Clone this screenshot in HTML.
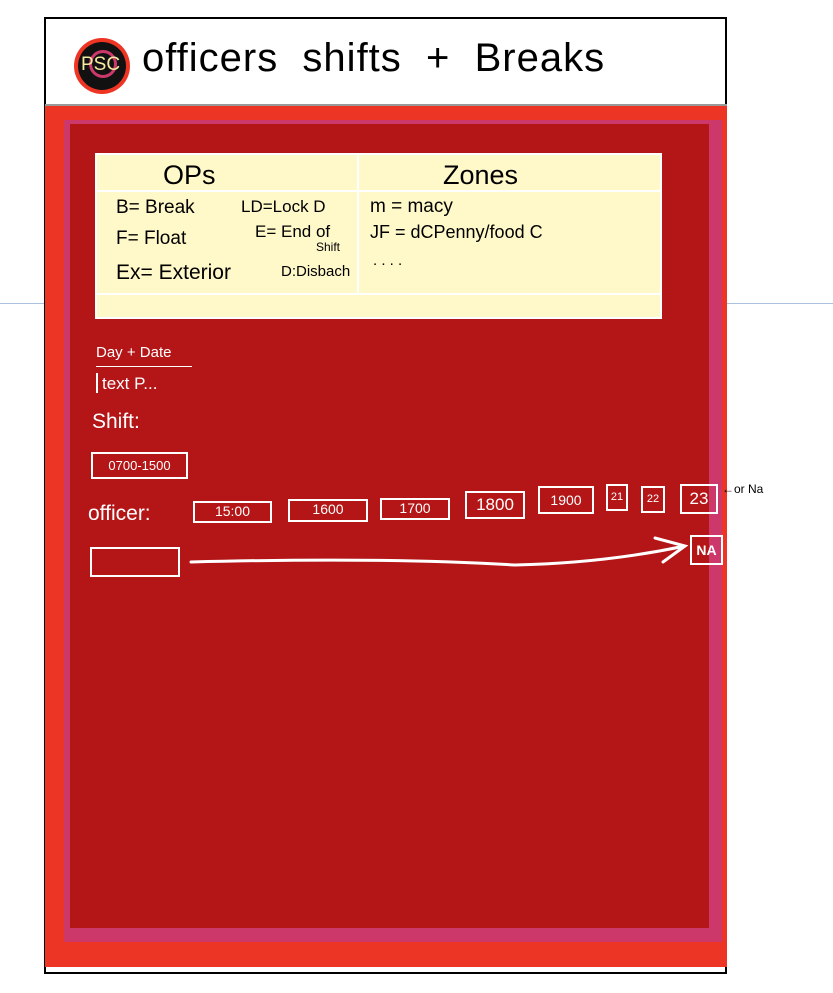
<!DOCTYPE html>
<html><head><style>
body{margin:0;width:833px;height:993px;background:#fff;position:relative;overflow:hidden;font-family:"Liberation Sans",sans-serif}
.a{position:absolute}
.w{color:#fff}
.box{position:absolute;border:2px solid #fff;box-sizing:border-box;color:#fff;font-size:14px;text-align:center;line-height:16px}
</style></head><body>
<div class="a" style="left:0;top:303px;width:833px;height:1px;background:#a9c3de"></div>
<div class="a" style="left:44px;top:17px;width:683px;height:957px;border:2px solid #000;box-sizing:border-box;background:#fff"></div>
<div class="a" style="left:45px;top:104px;width:682px;height:2px;background:#999"></div>
<div class="a" style="left:45px;top:106px;width:682px;height:861px;background:#ec3524"></div>
<div class="a" style="left:64px;top:120px;width:658px;height:822px;background:#cd386b"></div>
<div class="a" style="left:70px;top:124px;width:639px;height:804px;background:#b41517"></div>
<!-- logo -->
<div class="a" style="left:74px;top:38px;width:56px;height:56px;border-radius:50%;background:#ee3524"></div>
<div class="a" style="left:78px;top:42px;width:48px;height:48px;border-radius:50%;background:#111"></div>
<div class="a" style="left:89px;top:50px;width:28px;height:28px;border-radius:50%;border:3px solid #cd386b;box-sizing:border-box"></div>
<div class="a" style="left:81px;top:54px;font-size:19px;color:#f6eba0">PSC</div>
<div class="a" style="left:142px;top:36px;font-size:40px;color:#000;letter-spacing:1px">officers&nbsp; shifts &nbsp;+&nbsp; Breaks</div>
<!-- table -->
<div class="a" style="left:95px;top:153px;width:567px;height:166px;background:#fff8c8;border:2px solid #fff;box-sizing:border-box"></div>
<div class="a" style="left:96px;top:190px;width:565px;height:2px;background:#fff"></div>
<div class="a" style="left:96px;top:293px;width:565px;height:2px;background:#fff"></div>
<div class="a" style="left:357px;top:155px;width:2px;height:138px;background:#fff"></div>
<div class="a" style="left:163px;top:160px;font-size:27px">OPs</div>
<div class="a" style="left:443px;top:160px;font-size:27px">Zones</div>
<div class="a" style="left:116px;top:197px;font-size:19px">B= Break</div>
<div class="a" style="left:241px;top:197px;font-size:17px">LD=Lock D</div>
<div class="a" style="left:116px;top:228px;font-size:19px">F= Float</div>
<div class="a" style="left:255px;top:222px;font-size:17px">E= End of</div>
<div class="a" style="left:316px;top:240px;font-size:12px">Shift</div>
<div class="a" style="left:116px;top:261px;font-size:21px">Ex= Exterior</div>
<div class="a" style="left:281px;top:263px;font-size:15px">D:Disbach</div>
<div class="a" style="left:370px;top:196px;font-size:19px">m = macy</div>
<div class="a" style="left:370px;top:222px;font-size:18px">JF = dCPenny/food C</div>
<div class="a" style="left:373px;top:252px;font-size:15px">. . . .</div>
<!-- form -->
<div class="a w" style="left:96px;top:344px;font-size:15px">Day + Date</div>
<div class="a" style="left:96px;top:366px;width:96px;height:1px;background:#fff"></div>
<div class="a" style="left:96px;top:373px;width:2px;height:20px;background:#fff"></div>
<div class="a w" style="left:102px;top:374px;font-size:17px">text P...</div>
<div class="a w" style="left:92px;top:410px;font-size:21px">Shift:</div>
<div class="box" style="left:91px;top:452px;width:97px;height:27px;line-height:23px;font-size:13px">0700-1500</div>
<div class="a w" style="left:88px;top:502px;font-size:21px">officer:</div>
<div class="box" style="left:193px;top:501px;width:79px;height:22px">15:00</div>
<div class="box" style="left:288px;top:499px;width:80px;height:23px">1600</div>
<div class="box" style="left:380px;top:498px;width:70px;height:22px">1700</div>
<div class="box" style="left:465px;top:491px;width:60px;height:28px;font-size:17px;line-height:24px">1800</div>
<div class="box" style="left:538px;top:486px;width:56px;height:28px;line-height:24px">1900</div>
<div class="box" style="left:606px;top:484px;width:22px;height:27px;font-size:11px;line-height:23px">21</div>
<div class="box" style="left:641px;top:486px;width:24px;height:27px;font-size:11px;line-height:23px">22</div>
<div class="box" style="left:680px;top:484px;width:38px;height:30px;font-size:17px;line-height:26px">23</div>
<div class="a" style="left:722px;top:482px;font-size:12px">←or Na</div>
<div class="box" style="left:90px;top:547px;width:90px;height:30px"></div>
<svg class="a" style="left:185px;top:535px" width="510" height="40"><path d="M6 27 Q200 22 330 30 Q420 28 500 11 M470 3 L500 11 L478 27" fill="none" stroke="#fff" stroke-width="3" stroke-linecap="round"/></svg>
<div class="box" style="left:690px;top:535px;width:33px;height:30px;font-size:14px;line-height:26px;font-weight:bold">NA</div>
</body></html>
